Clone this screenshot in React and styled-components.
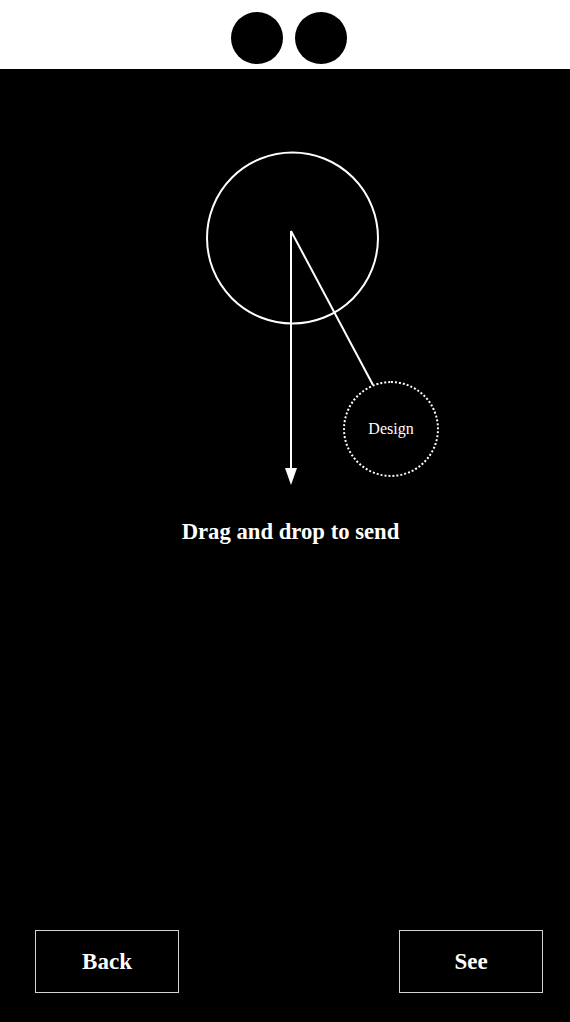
import React from 'react';
import styled, { createGlobalStyle } from 'styled-components';

const GlobalStyle = createGlobalStyle`
  html, body {
    margin: 0;
    padding: 0;
    background: #000;
  }
  body {
    font-family: "Liberation Serif", serif;
  }
`;

const Screen = styled.div`
  display: flex;
  flex-direction: column;
  width: 570px;
  height: 1022px;
  background: #000;
  color: #fff;
`;

const Header = styled.header`
  display: flex;
  justify-content: center;
  gap: 12px;
  height: 69px;
  box-sizing: border-box;
  padding: 12px 0 0 8px;
  background: #fff;
`;

const Dot = styled.div`
  width: 52px;
  height: 52px;
  border-radius: 50%;
  background: #000;
`;

const Stage = styled.div`
  position: relative;
  height: 430px;
  & > svg {
    display: block;
  }
`;

const Node = styled.div`
  position: absolute;
  left: 343px;
  top: 312px;
  width: 96px;
  height: 96px;
  box-sizing: border-box;
  border: 2px dotted #fff;
  border-radius: 50%;
  display: flex;
  align-items: center;
  justify-content: center;
  font-size: 16px;
`;

const Title = styled.h2`
  margin: 20px 0 0 11px;
  text-align: center;
  font-size: 22.7px;
  font-weight: 700;
  line-height: 26px;
`;

const Footer = styled.footer`
  margin-top: auto;
  display: flex;
  justify-content: space-between;
  padding: 0 27px 29px 35px;
`;

const Button = styled.button`
  width: 144px;
  height: 63px;
  box-sizing: border-box;
  background: #000;
  color: #fff;
  border: 1px solid #d4d4d4;
  font-family: "Liberation Serif", serif;
  font-size: 23px;
  font-weight: 700;
  cursor: pointer;
`;

export default function App() {
  return (
    <Screen>
      <GlobalStyle />
      <Header>
        <Dot />
        <Dot />
      </Header>
      <Stage>
        <svg width="570" height="430" viewBox="0 69 570 430">
          <circle cx="292.5" cy="238" r="85.5" fill="none" stroke="#fff" strokeWidth="2" />
          <line x1="291" y1="231" x2="291" y2="470" stroke="#fff" strokeWidth="2" />
          <polygon points="285,468 297,468 291,485" fill="#fff" />
          <line x1="291" y1="231" x2="373" y2="385" stroke="#fff" strokeWidth="2" />
        </svg>
        <Node>Design</Node>
      </Stage>
      <Title>Drag and drop to send</Title>
      <Footer>
        <Button>Back</Button>
        <Button>See</Button>
      </Footer>
    </Screen>
  );
}
